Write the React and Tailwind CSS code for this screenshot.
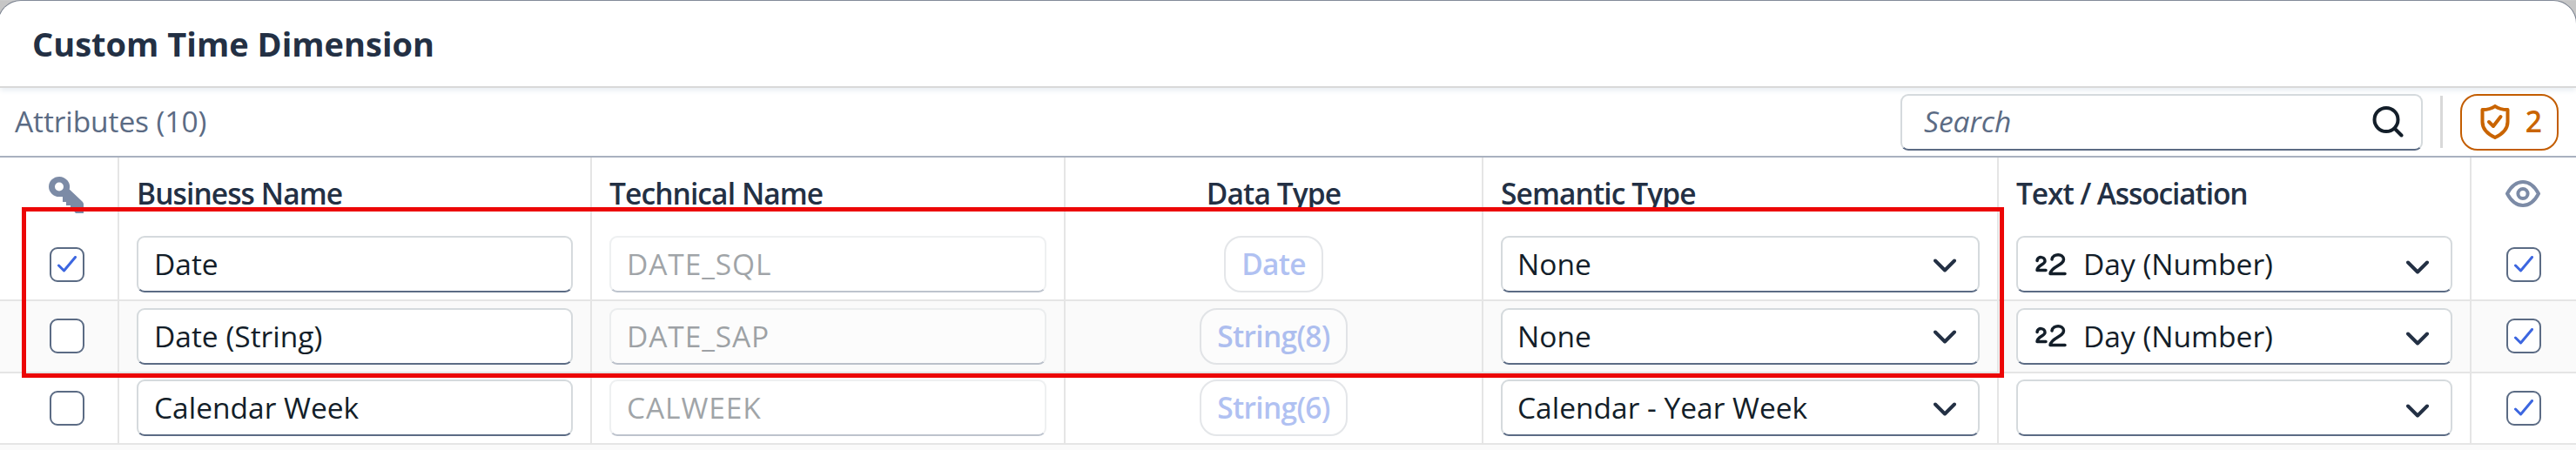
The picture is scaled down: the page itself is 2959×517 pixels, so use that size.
const columns = "grid grid-cols-[137px_543px_544px_480px_592px_543px_1fr]";

const rows = [
  { key: true, name: "Date", technical: "DATE_SQL", type: "Date", semantic: "None", text: "Day (Number)" },
  { key: false, name: "Date (String)", technical: "DATE_SAP", type: "String(8)", semantic: "None", text: "Day (Number)" },
  { key: false, name: "Calendar Week", technical: "CALWEEK", type: "String(6)", semantic: "Calendar - Year Week", text: "" },
];

function KeyIcon() {
  return (
    <svg className="w-10 h-[42px]" viewBox="0 0 40 42">
      <path
        fill="#7c8ba6"
        fillRule="evenodd"
        d="M12 0a12 11.500 0 0 1 11.700 14.500L38.500 28.500q1.500 1.500 1.500 3V42H31l-6-7v-2h-5v-4h-4v-6h-4A12 11.500 0 0 1 12 0ZM12 6.500a5 5 0 1 0 0 10 5 5 0 0 0 0-10Z"
      />
    </svg>
  );
}

function EyeIcon() {
  return (
    <svg className="w-10 h-[31px]" viewBox="0 0 40 31" fill="none" stroke="#7c8ba6" strokeWidth="4" strokeLinejoin="round">
      <path d="M2 15.500C6 8 12 2 20 2s14 6 18 13.500C34 23 28 29 20 29S6 23 2 15.500Z" />
      <circle cx="20" cy="15.500" r="5.600" />
    </svg>
  );
}

function NumberIcon() {
  return (
    <svg className="w-9 h-[26px]" viewBox="0 0 36 26" fill="none" stroke="#131e29" strokeLinecap="round" strokeLinejoin="round" strokeWidth="3.500">
      <path d="M2 8.500C2.500 3 11 3.500 11 9c0 4-9 5-9 10.500h10" />
      <path d="M19 7C20 0 32.500 0 32.500 7c0 7-14.500 8-15.500 16.500h17" />
    </svg>
  );
}

function Chevron({ className }) {
  return (
    <svg className={`ml-auto w-[26px] h-4 ${className}`} viewBox="0 0 26 16" fill="none" stroke="#233044" strokeWidth="4" strokeLinecap="round" strokeLinejoin="round">
      <path d="M2 2.500 13 13.500 24 2.500" />
    </svg>
  );
}

function Checkbox({ checked }) {
  return (
    <div className="flex w-10 h-10 items-center justify-center rounded-[9px] border-2 border-[#5b6b84] bg-white">
      {checked && (
        <svg className="w-[22px] h-[19px]" viewBox="0 0 22 19" fill="none" stroke="#3c66e0" strokeWidth="3" strokeLinecap="round" strokeLinejoin="round">
          <path d="M1.500 11 7.500 17 20.500 1.500" />
        </svg>
      )}
    </div>
  );
}

function Field({ children, disabled, className = "" }) {
  return (
    <div
      className={`flex h-[65px] items-center rounded-[9px] border-2 border-[#d5dadd] border-b-[#5b6b84] bg-white ${className} ${
        disabled ? "tracking-[0.9px] opacity-40" : ""
      }`}
    >
      {children}
    </div>
  );
}

export default function App() {
  return (
    <div className="relative w-[2959px] h-[517px] overflow-hidden bg-[#c6c6c6] font-['Open_Sans',sans-serif] text-[33.500px] leading-none text-[#131e29]">
      <div className="-ml-[3px] -mr-px h-full rounded-t-[27px] border-x border-t border-[#757d8b] bg-white pl-[2px]">
        <header className="flex h-[100px] items-center border-b-2 border-[#d9d9d9] pl-[37px] text-[38px] font-bold text-[#233044] shadow-[0_3px_6px_#e9eef3]">
          <h1>Custom Time Dimension</h1>
        </header>

        <div className="flex h-20 items-center border-b-2 border-[#a9b1bf] pl-[17px] pr-5 text-[#5b6b84]">
          <span className="tracking-[-0.1px]">Attributes (10)</span>
          <Field className="ml-auto w-[600px] pl-[25px] pr-5">
            <span className="italic">Search</span>
            <svg className="ml-auto w-9 h-9" viewBox="0 0 36 36" fill="none" stroke="#131e29" strokeWidth="4" strokeLinecap="round">
              <circle cx="16" cy="15.500" r="13.500" />
              <path d="m26 26 7.500 7.500" />
            </svg>
          </Field>
          <div className="mx-5 h-[60px] w-[3px] bg-[#d9d9d9]" />
          <button className="flex h-[65px] w-[113px] items-center justify-between rounded-[20px] border-2 border-[#c35d00] pl-[21px] pr-[17px] font-semibold text-[#c96400]">
            <svg className="w-[34px] h-10" viewBox="0 0 34 40" fill="none" stroke="#c96400" strokeWidth="4" strokeLinejoin="round">
              <path d="M17 2C13 5 8 6 2.500 6v14c0 8 6 14 14.500 18 8.500-4 14.500-10 14.500-18V6C26 6 21 5 17 2Z" />
              <path d="m10 20 5 5 8.500-11" strokeLinecap="round" />
            </svg>
            2
          </button>
        </div>

        <div className={`${columns} h-[82.500px] font-semibold tracking-[-0.9px] text-[#233044] [&>*]:border-r-2 [&>*]:border-[#e5e5e5] [&>*:last-child]:border-0`}>
          <div className="pl-14 pt-[22px]"><KeyIcon /></div>
          <div className="pl-5 pt-[25px]">Business Name</div>
          <div className="pl-5 pt-[25px]">Technical Name</div>
          <div className="pt-[25px] text-center">Data Type</div>
          <div className="pl-5 pt-[25px]">Semantic Type</div>
          <div className="pl-5 pt-[25px] tracking-[-1.100px]">Text / Association</div>
          <div className="pl-[39px] pt-[26px]"><EyeIcon /></div>
        </div>

        {rows.map((row) => (
          <div
            key={row.technical}
            className={`${columns} h-[82.500px] border-b-2 border-[#e5e5e5] even:bg-white odd:bg-[#fafafa] [&>*]:flex [&>*]:items-center [&>*]:border-r-2 [&>*]:border-[#e5e5e5] [&>*:last-child]:border-0`}
          >
            <div className="pl-[57px]"><Checkbox checked={row.key} /></div>
            <div className="px-5"><Field className="w-full pl-[18px]">{row.name}</Field></div>
            <div className="px-5"><Field className="w-full pl-[18px]" disabled>{row.technical}</Field></div>
            <div className="justify-center">
              <span className="flex h-[65px] items-center rounded-[20px] border-2 border-[#bcc3ca] bg-white px-[18px] font-semibold tracking-[-0.7px] text-[#3c66e0] opacity-40">{row.type}</span>
            </div>
            <div className="px-5">
              <Field className="w-full pl-[17px] pr-[25px]">
                {row.semantic}
                <Chevron className="mt-0.5" />
              </Field>
            </div>
            <div className="px-5">
              <Field className="w-full pl-5 pr-[25px]">
                {row.text && <NumberIcon />}
                <span className="ml-[19px]">{row.text}</span>
                <Chevron className="mt-1.5" />
              </Field>
            </div>
            <div className="pl-10"><Checkbox checked /></div>
          </div>
        ))}
        <div className="h-2 bg-[#fafafa]" />
      </div>

      <div className="absolute left-[25px] top-[238px] h-[196px] w-[2277px] border-[5px] border-[#ec0606]" />
    </div>
  );
}
